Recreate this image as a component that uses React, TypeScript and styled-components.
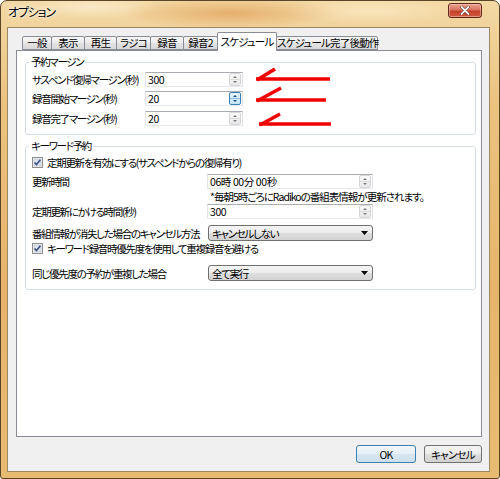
import React from "react";
import styled, { createGlobalStyle } from "styled-components";

const UI_FONT = `"Noto Sans CJK JP", "Noto Sans", sans-serif`;
const FS = "10.5px";
const LS = "-1.3px";

const GlobalStyle = createGlobalStyle`
  html, body { margin: 0; padding: 0; background: #ffffff; }
  *, *::before, *::after { box-sizing: border-box; }
`;

const Window = styled.div`
  position: relative;
  width: 500px;
  height: 479px;
  display: flex;
  flex-direction: column;
  padding: 0 9px 6px 6px;
  border: 1px solid #5a4526;
  border-radius: 7px 7px 3px 3px;
  background:
    radial-gradient(ellipse 110px 16px at 230px 12px, rgba(214, 128, 48, 0.45), transparent),
    radial-gradient(ellipse 70px 12px at 90px 6px, rgba(255, 245, 225, 0.6), transparent),
    radial-gradient(ellipse 90px 14px at 370px 10px, rgba(255, 240, 210, 0.55), transparent),
    linear-gradient(180deg, #f3d9a5 0%, #ebc27f 22%, #e6b56b 60%, #e8bb73 100%);
  font-family: ${UI_FONT};
  font-feature-settings: "palt";
  color: #000;
  overflow: hidden;
`;

const TitleBar = styled.div`
  height: 26px;
  flex-shrink: 0;
  display: flex;
  justify-content: space-between;
  align-items: flex-start;
  padding-left: 1px;
`;

const Title = styled.div`
  font-size: 12px;
  line-height: 22px;
  letter-spacing: -1.2px;
  color: #000;
  text-shadow: 0 0 6px rgba(255, 255, 255, 0.95), 0 0 3px rgba(255, 255, 255, 0.9);
`;

const CloseButton = styled.div`
  margin-top: 2px;
  margin-right: 8px;
  width: 34px;
  height: 15px;
  border: 1px solid #5e2418;
  border-radius: 3px;
  display: flex;
  align-items: center;
  justify-content: center;
  background: linear-gradient(180deg, #e9a493 0%, #d9735f 45%, #c4412b 55%, #cf5a3f 100%);
  box-shadow: inset 0 0 0 1px rgba(255, 210, 190, 0.5);
`;

const Client = styled.div`
  flex: 1;
  display: flex;
  flex-direction: column;
  background: #f0f0f0;
  border: 1px solid #9c8763;
  padding: 4px 7px 0 8px;
`;

const TabStrip = styled.div`
  position: relative;
  z-index: 1;
  height: 18px;
  flex-shrink: 0;
  display: flex;
  align-items: flex-end;
  padding-left: 6px;
`;

const Tab = styled.div<{ $w: number; $sel?: boolean }>`
  width: ${(p) => p.$w}px;
  height: ${(p) => (p.$sel ? 19 : 14)}px;
  margin-bottom: ${(p) => (p.$sel ? -1 : 0)}px;
  margin-right: -1px;
  border: 1px solid #898c95;
  border-bottom: ${(p) => (p.$sel ? "none" : "1px solid #898c95")};
  border-radius: 2px 2px 0 0;
  background: ${(p) =>
    p.$sel ? "#ffffff" : "linear-gradient(180deg, #f6f6f6 0%, #ececec 50%, #e2e2e2 51%, #dadada 100%)"};
  font-size: ${FS};
  line-height: ${(p) => (p.$sel ? 17 : 12)}px;
  letter-spacing: -0.8px;
  text-align: center;
  white-space: nowrap;
  position: relative;
  z-index: ${(p) => (p.$sel ? 2 : 1)};
`;

const Panel = styled.div`
  height: 387px;
  flex-shrink: 0;
  background: #ffffff;
  border: 1px solid #898c95;
  padding: 4px 5px 0 8px;
  display: flex;
  flex-direction: column;
`;

const Group = styled.fieldset<{ $mt?: number }>`
  margin: ${(p) => p.$mt ?? 0}px 0 0 0;
  border: 1px solid #d5dfe5;
  border-radius: 3px;
  padding: 0 6px 8px 6px;
  min-inline-size: 0;
`;

const Legend = styled.legend`
  margin-left: -3px;
  padding: 0 2px;
  font-size: ${FS};
  line-height: 14px;
  letter-spacing: ${LS};
`;

const Row = styled.div<{ $h: number; $mt?: number }>`
  height: ${(p) => p.$h}px;
  margin-top: ${(p) => p.$mt ?? 0}px;
  display: flex;
  align-items: center;
`;

const Label = styled.div<{ $w: number }>`
  width: ${(p) => p.$w}px;
  flex-shrink: 0;
  font-size: ${FS};
  letter-spacing: ${LS};
  white-space: nowrap;
`;

const Field = styled.div<{ $w: number }>`
  width: ${(p) => p.$w}px;
  height: 15px;
  flex-shrink: 0;
  display: flex;
  align-items: center;
  padding-left: 2px;
  background: #ffffff;
  border: 1px solid;
  border-color: #abadb3 #dbdfe6 #e3e9ef #e2e3ea;
  font-size: ${FS};
  letter-spacing: -0.4px;
  line-height: 13px;
`;

const FieldText = styled.span`
  flex: 1;
  white-space: pre;
`;

const SpinBox = styled.div<{ $active?: boolean }>`
  width: 12px;
  height: 13px;
  margin-right: 1px;
  flex-shrink: 0;
  border: 1px solid ${(p) => (p.$active ? "#3c7fb1" : "#d6d6d6")};
  border-radius: 2px;
  background: ${(p) =>
    p.$active ? "linear-gradient(180deg, #e5f4fc 0%, #c4e5f6 100%)" : "linear-gradient(180deg, #fafafa 0%, #e8e8e8 100%)"};
  display: flex;
`;

const Note = styled.div<{ $ml: number }>`
  margin-left: ${(p) => p.$ml}px;
  font-size: ${FS};
  letter-spacing: -1px;
  line-height: 12px;
  white-space: nowrap;
`;

const Combo = styled.div<{ $w: number; $ml?: number }>`
  width: ${(p) => p.$w}px;
  height: 16px;
  margin-left: ${(p) => p.$ml ?? 0}px;
  flex-shrink: 0;
  display: flex;
  align-items: center;
  justify-content: space-between;
  padding: 0 4px 0 3px;
  border: 1px solid #707070;
  border-radius: 3px;
  background: linear-gradient(180deg, #f4f4f4 0%, #ececec 50%, #dfdfdf 51%, #d2d2d2 100%);
  font-size: ${FS};
  letter-spacing: ${LS};
  white-space: nowrap;
`;

const CheckText = styled.span`
  margin-left: 4px;
  font-size: ${FS};
  letter-spacing: ${LS};
  white-space: nowrap;
`;

const ButtonRow = styled.div`
  display: flex;
  justify-content: flex-end;
  gap: 8px;
  padding-top: 8px;
`;

const Button = styled.div<{ $w: number; $default?: boolean }>`
  width: ${(p) => p.$w}px;
  height: 18px;
  display: flex;
  align-items: center;
  justify-content: center;
  border: 1px solid ${(p) => (p.$default ? "#3c7fb1" : "#707070")};
  border-radius: 3px;
  background: ${(p) =>
    p.$default
      ? "linear-gradient(180deg, #f0f6fb 0%, #e6eff7 50%, #d8e6f2 51%, #cddfee 100%)"
      : "linear-gradient(180deg, #f4f4f4 0%, #ececec 50%, #dfdfdf 51%, #d2d2d2 100%)"};
  font-size: ${FS};
  letter-spacing: -0.8px;
`;

const Overlay = styled.svg`
  position: absolute;
  left: -1px;
  top: -1px;
  pointer-events: none;
`;

const Spin: React.FC<{ active?: boolean }> = ({ active }) => (
  <SpinBox $active={active}>
    <svg width="10" height="11" viewBox="0 0 10 11">
      <path d="M3 4 L5 2 L7 4 Z" fill={active ? "#1f4f7a" : "#7a7a7a"} />
      <path d="M3 7 L5 9 L7 7 Z" fill={active ? "#1f4f7a" : "#7a7a7a"} />
      <line x1="0" y1="5.5" x2="10" y2="5.5" stroke={active ? "#8fbfe0" : "#dcdcdc"} strokeWidth="1" />
    </svg>
  </SpinBox>
);

const CheckBox: React.FC = () => (
  <svg width="11" height="11" viewBox="0 0 11 11" style={{ flexShrink: 0 }}>
    <rect x="0.5" y="0.5" width="10" height="10" fill="#f4f4f4" stroke="#8e8f8f" />
    <rect x="2" y="2" width="7" height="7" fill="#dfe5ee" stroke="#b6bdc8" strokeWidth="0.6" />
    <path d="M2.6 5.4 L4.5 7.6 L8.4 2.8" fill="none" stroke="#3d4f86" strokeWidth="1.6" />
  </svg>
);

const DropArrow: React.FC = () => (
  <svg width="7" height="4" viewBox="0 0 7 4">
    <path d="M0 0 H7 L3.5 4 Z" fill="#000" />
  </svg>
);

const tabs = [
  { t: "一般", w: 30 },
  { t: "表示", w: 34 },
  { t: "再生", w: 33 },
  { t: "ラジコ", w: 35 },
  { t: "録音", w: 34 },
  { t: "録音2", w: 35 },
  { t: "スケジュール", w: 60, sel: true },
  { t: "スケジュール完了後動作", w: 102 },
];

const margins = [
  { label: "サスペンド復帰マージン(秒)", value: "300", mt: 3 },
  { label: "録音開始マージン(秒)", value: "20", mt: 4, active: true },
  { label: "録音完了マージン(秒)", value: "20", mt: 5 },
];

export default function App() {
  return (
    <>
      <GlobalStyle />
      <Window>
        <TitleBar>
          <Title>オプション</Title>
          <CloseButton>
            <svg width="10" height="9" viewBox="0 0 10 9">
              <path d="M1.5 1 L8.5 8 M8.5 1 L1.5 8" stroke="#6b2a1c" strokeWidth="3" strokeLinecap="round" />
              <path d="M1.5 1 L8.5 8 M8.5 1 L1.5 8" stroke="#ffffff" strokeWidth="1.8" strokeLinecap="round" />
            </svg>
          </CloseButton>
        </TitleBar>
        <Client>
          <TabStrip>
            {tabs.map((tb) => (
              <Tab key={tb.t} $w={tb.w} $sel={tb.sel}>
                {tb.t}
              </Tab>
            ))}
          </TabStrip>
          <Panel>
            <Group>
              <Legend>予約マージン</Legend>
              {margins.map((m) => (
                <Row key={m.label} $h={15} $mt={m.mt}>
                  <Label $w={113}>{m.label}</Label>
                  <Field $w={98}>
                    <FieldText>{m.value}</FieldText>
                    <Spin active={m.active} />
                  </Field>
                </Row>
              ))}
            </Group>
            <Group $mt={4}>
              <Legend>キーワード予約</Legend>
              <Row $h={14} $mt={2}>
                <CheckBox />
                <CheckText>定期更新を有効にする(サスペンドからの復帰有り)</CheckText>
              </Row>
              <Row $h={15} $mt={5}>
                <Label $w={175}>更新時間</Label>
                <Field $w={166}>
                  <FieldText>06時 00分 00秒</FieldText>
                  <Spin />
                </Field>
              </Row>
              <Row $h={12} $mt={2}>
                <Note $ml={178}>*毎朝5時ごろにRadikoの番組表情報が更新されます。</Note>
              </Row>
              <Row $h={15} $mt={1}>
                <Label $w={175}>定期更新にかける時間(秒)</Label>
                <Field $w={166}>
                  <FieldText>300</FieldText>
                  <Spin />
                </Field>
              </Row>
              <Row $h={16} $mt={6}>
                <Label $w={175}>番組情報が消失した場合のキャンセル方法</Label>
                <Combo $w={165} $ml={1}>
                  <span>キャンセルしない</span>
                  <DropArrow />
                </Combo>
              </Row>
              <Row $h={14}>
                <CheckBox />
                <CheckText>キーワード録音時優先度を使用して重複録音を避ける</CheckText>
              </Row>
              <Row $h={16} $mt={10}>
                <Label $w={175}>同じ優先度の予約が重複した場合</Label>
                <Combo $w={165} $ml={1}>
                  <span>全て実行</span>
                  <DropArrow />
                </Combo>
              </Row>
            </Group>
          </Panel>
          <ButtonRow>
            <Button $w={60} $default>
              OK
            </Button>
            <Button $w={58}>キャンセル</Button>
          </ButtonRow>
        </Client>
        <Overlay width="500" height="479" viewBox="0 0 500 479">
          <g stroke="#f00000" strokeWidth="3.5" fill="none" strokeLinecap="butt">
            <path d="M256 79 H330" />
            <path d="M257 80 L275 69" />
            <path d="M256 100 H326" />
            <path d="M257 101 L281 88" />
            <path d="M259 124 H331" />
            <path d="M260 125 L280 114" />
          </g>
        </Overlay>
      </Window>
    </>
  );
}
